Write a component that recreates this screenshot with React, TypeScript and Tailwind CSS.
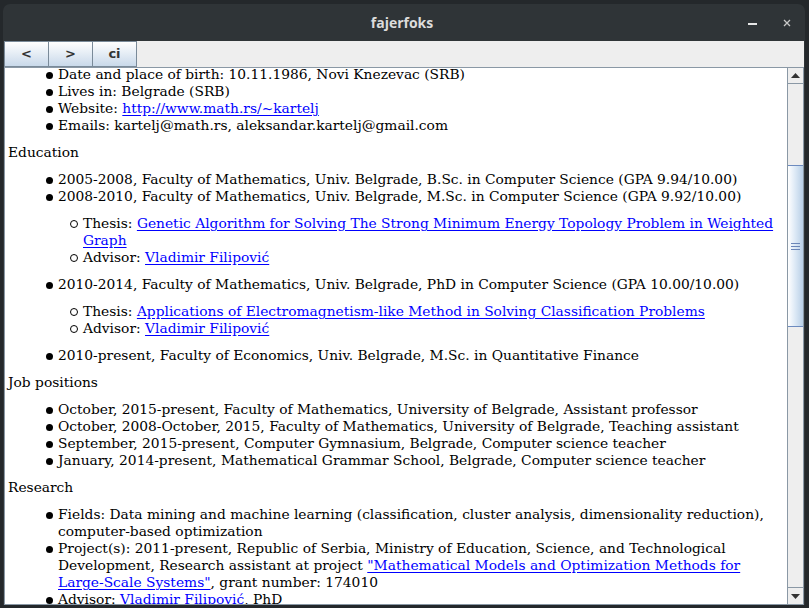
import React from 'react';

const serif = { fontFamily: '"DejaVu Serif", serif' };

function Link({ children }: { children: React.ReactNode }) {
  return <span className="text-[#0000ff] underline underline-offset-2">{children}</span>;
}

function Item({ children }: { children: React.ReactNode }) {
  return (
    <li className="flex items-start">
      <span className="mt-[6px] mr-[5px] h-[7px] w-[7px] shrink-0 rounded-full bg-black" />
      <div className="whitespace-nowrap">{children}</div>
    </li>
  );
}

function SubItem({ children }: { children: React.ReactNode }) {
  return (
    <li className="flex items-start">
      <span className="mt-[5px] mr-[5px] h-[8px] w-[8px] shrink-0 rounded-full border border-black" />
      <div className="whitespace-nowrap">{children}</div>
    </li>
  );
}

function Section({ title }: { title: string }) {
  return <div className="pl-[3px]">{title}</div>;
}

export default function App() {
  return (
    <div className="relative h-[608px] w-[809px] overflow-hidden bg-[#24282b]">
      <div className="ml-[3px] mt-[4px] flex h-[601px] w-[802px] flex-col overflow-hidden rounded-t-[7px] bg-[#2f3437]">
        {/* title bar */}
        <div className="flex h-[37px] shrink-0 items-center px-[10px]">
          <div className="flex-1" />
          <div className="text-[14px] font-bold text-[#dcdcdc]" style={{ fontFamily: '"Open Sans", sans-serif' }}>
            fajerfoks
          </div>
          <div className="flex flex-1 items-center justify-end gap-[26px] pr-[4px]">
            <span className="mt-[2px] block h-[2px] w-[9px] bg-[#e6e6e6]" />
            <svg width="8" height="8" viewBox="0 0 8 8" className="mt-[1px]">
              <path d="M1 1L7 7M7 1L1 7" stroke="#c8c8c8" strokeWidth="1.3" />
            </svg>
          </div>
        </div>

        {/* toolbar */}
        <div className="mx-[1px] flex h-[26px] shrink-0 bg-[#eeeeee]">
          {['<', '>', 'ci'].map((b) => (
            <div
              key={b}
              className="flex h-[26px] w-[45px] items-center justify-center border border-[#7a8a99] bg-gradient-to-b from-[#ffffff] to-[#c9d9ea] text-[13px] font-bold text-[#333333] [&:not(:first-child)]:-ml-[1px]"
              style={{ fontFamily: '"DejaVu Sans", sans-serif' }}
            >
              {b}
            </div>
          ))}
        </div>

        {/* content */}
        <div className="mx-[1px] flex min-h-0 flex-1 border border-[#8a98a5] bg-white">
          <div className="min-w-0 flex-1 overflow-hidden text-[13.8px] leading-[17px] text-black" style={serif}>
            <div className="mt-[-2px]">
              <ul className="mb-[10px] pl-[41px]">
                <Item>Date and place of birth: 10.11.1986, Novi Knezevac (SRB)</Item>
                <Item>Lives in: Belgrade (SRB)</Item>
                <Item>
                  Website: <Link>http://www.math.rs/~kartelj</Link>
                </Item>
                <Item>Emails: kartelj@math.rs, aleksandar.kartelj@gmail.com</Item>
              </ul>

              <Section title="Education" />
              <ul className="my-[10px] pl-[41px]">
                <Item>2005-2008, Faculty of Mathematics, Univ. Belgrade, B.Sc. in Computer Science (GPA 9.94/10.00)</Item>
                <Item>
                  2008-2010, Faculty of Mathematics, Univ. Belgrade, M.Sc. in Computer Science (GPA 9.92/10.00)
                  <ul className="my-[10px] pl-[12px]">
                    <SubItem>
                      Thesis: <Link>Genetic Algorithm for Solving The Strong Minimum Energy Topology Problem in Weighted</Link>
                      <br />
                      <Link>Graph</Link>
                    </SubItem>
                    <SubItem>
                      Advisor: <Link>Vladimir Filipović</Link>
                    </SubItem>
                  </ul>
                </Item>
                <Item>
                  2010-2014, Faculty of Mathematics, Univ. Belgrade, PhD in Computer Science (GPA 10.00/10.00)
                  <ul className="my-[10px] pl-[12px]">
                    <SubItem>
                      Thesis: <Link>Applications of Electromagnetism-like Method in Solving Classification Problems</Link>
                    </SubItem>
                    <SubItem>
                      Advisor: <Link>Vladimir Filipović</Link>
                    </SubItem>
                  </ul>
                </Item>
                <Item>2010-present, Faculty of Economics, Univ. Belgrade, M.Sc. in Quantitative Finance</Item>
              </ul>

              <Section title="Job positions" />
              <ul className="my-[10px] pl-[41px]">
                <Item>October, 2015-present, Faculty of Mathematics, University of Belgrade, Assistant professor</Item>
                <Item>October, 2008-October, 2015, Faculty of Mathematics, University of Belgrade, Teaching assistant</Item>
                <Item>September, 2015-present, Computer Gymnasium, Belgrade, Computer science teacher</Item>
                <Item>January, 2014-present, Mathematical Grammar School, Belgrade, Computer science teacher</Item>
              </ul>

              <Section title="Research" />
              <ul className="my-[10px] pl-[41px]">
                <Item>
                  Fields: Data mining and machine learning (classification, cluster analysis, dimensionality reduction),
                  <br />
                  computer-based optimization
                </Item>
                <Item>
                  Project(s): 2011-present, Republic of Serbia, Ministry of Education, Science, and Technological
                  <br />
                  Development, Research assistant at project <Link>"Mathematical Models and Optimization Methods for</Link>
                  <br />
                  <Link>Large-Scale Systems"</Link>, grant number: 174010
                </Item>
                <Item>
                  Advisor: <Link>Vladimir Filipović</Link>, PhD
                </Item>
              </ul>
            </div>
          </div>

          {/* scrollbar */}
          <div className="flex w-[16px] shrink-0 flex-col border-l border-[#8a98a5] bg-[#eeeeee]">
            <div className="flex h-[16px] shrink-0 items-center justify-center border-b border-[#8a98a5] bg-[#eeeeee]">
              <svg width="9" height="5" viewBox="0 0 9 5">
                <path d="M0 5L4.5 0L9 5Z" fill="#333333" />
              </svg>
            </div>
            <div className="h-[81px] shrink-0" />
            <div className="flex h-[162px] shrink-0 items-center justify-center border-y border-[#6d8bbf] bg-gradient-to-r from-[#ffffff] via-[#dbe8f5] to-[#b8cfe6]">
              <div className="flex flex-col gap-[2px]">
                <span className="block h-[1px] w-[9px] bg-[#6b86b8]" />
                <span className="block h-[1px] w-[9px] bg-[#6b86b8]" />
                <span className="block h-[1px] w-[9px] bg-[#6b86b8]" />
              </div>
            </div>
            <div className="flex-1" />
            <div className="flex h-[17px] shrink-0 items-center justify-center border-t border-[#8a98a5] bg-[#eeeeee]">
              <svg width="9" height="5" viewBox="0 0 9 5">
                <path d="M0 0L9 0L4.5 5Z" fill="#333333" />
              </svg>
            </div>
          </div>
        </div>
      </div>
    </div>
  );
}
